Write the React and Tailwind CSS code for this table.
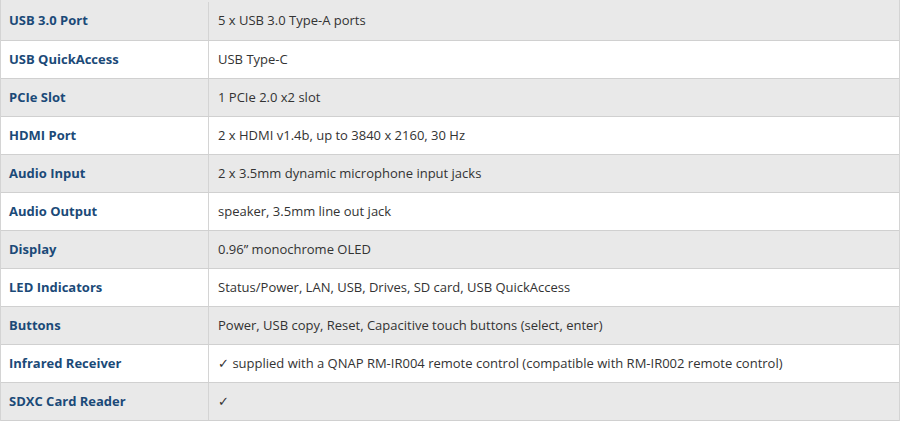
const specs = [
  ['USB 3.0 Port', '5 x USB 3.0 Type-A ports'],
  ['USB QuickAccess', 'USB Type-C'],
  ['PCIe Slot', '1 PCIe 2.0 x2 slot'],
  ['HDMI Port', '2 x HDMI v1.4b, up to 3840 x 2160, 30 Hz'],
  ['Audio Input', '2 x 3.5mm dynamic microphone input jacks'],
  ['Audio Output', 'speaker, 3.5mm line out jack'],
  ['Display', '0.96\u201d monochrome OLED'],
  ['LED Indicators', 'Status/Power, LAN, USB, Drives, SD card, USB QuickAccess'],
  ['Buttons', 'Power, USB copy, Reset, Capacitive touch buttons (select, enter)'],
  ['Infrared Receiver', '\u2713 supplied with a QNAP RM-IR004 remote control (compatible with RM-IR002 remote control)'],
  ['SDXC Card Reader', '\u2713'],
];

export default function App() {
  return (
    <div className="w-[902px] h-[422px] bg-white overflow-hidden" style={{ fontFamily: '"Open Sans", sans-serif' }}>
      <div className="w-[900px] border-l border-r border-[#d4d4d4]">
        {specs.map(([label, value], i) => (
          <div
            key={label}
            className={`grid grid-cols-[208px_1fr] border-b border-[#d0d0d0] ${i % 2 === 0 ? 'bg-[#e9e9e9]' : 'bg-white'} ${i === 0 ? 'h-[41px] pt-[2px]' : 'h-[38px]'}`}
          >
            <div className="flex items-center pl-[8px] border-r border-[#d4d4d4] text-[13px] font-bold text-[#1b4a78]">
              {label}
            </div>
            <div className="flex items-center pl-[9px] text-[13px] text-[#333333]">
              {value}
            </div>
          </div>
        ))}
      </div>
    </div>
  );
}
